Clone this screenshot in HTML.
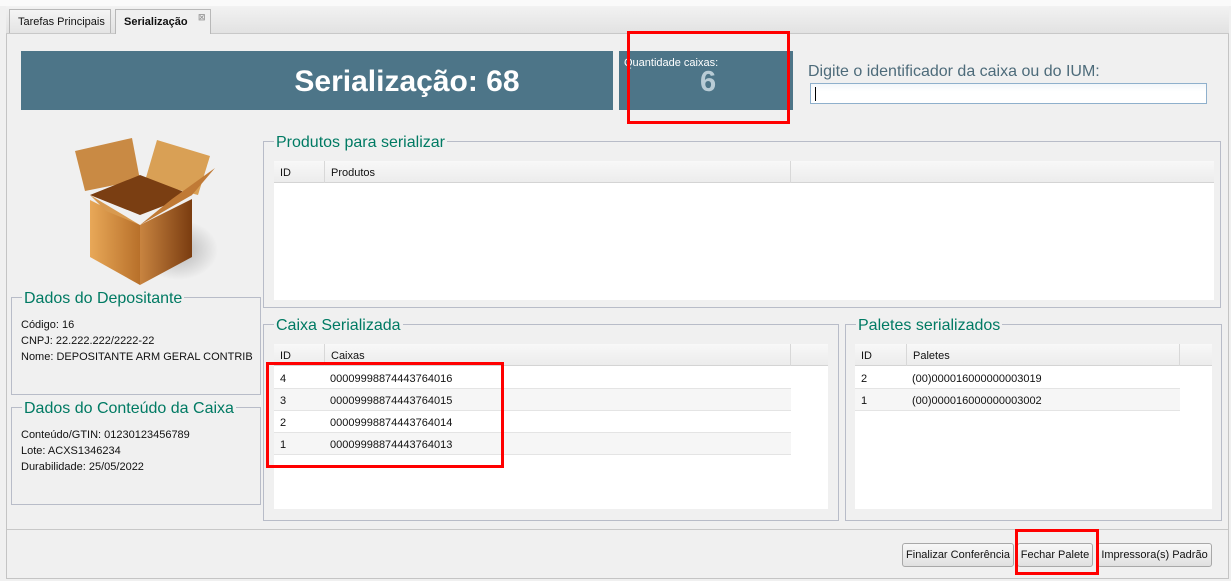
<!DOCTYPE html>
<html><head><meta charset="utf-8"><style>
*{box-sizing:border-box;margin:0;padding:0}
body{width:1231px;height:581px;background:#f0f0f0;font-family:"Liberation Sans","DejaVu Sans",sans-serif;font-size:11px;color:#111;position:relative;overflow:hidden}
.a{position:absolute}
.fs{position:absolute;border:1px solid #b8bcc8}
.lg{position:absolute;top:-9px;left:10px;background:#f0f0f0;color:#007a63;font-size:16px;padding:0 2px;line-height:20px;white-space:nowrap}
.tbl{position:absolute;background:#fff}
.hd{position:absolute;left:0;top:0;height:22px;background:linear-gradient(#f8f8f8,#ececec);border-bottom:1px solid #d4d4d4}
.hc{position:absolute;top:0;height:22px;line-height:24px;padding-left:6px;border-right:1px solid #d8d8d8}
.row{position:absolute;left:0;height:22px;line-height:24px;border-bottom:1px solid #e4e4e4}
.row span{position:absolute}
.red{position:absolute;border:3px solid #f00}
.btn{position:absolute;top:543px;height:24px;border:1px solid #a8a8a8;border-radius:3px;background:linear-gradient(#f8f8f8,#e0e0e0);line-height:22px;text-align:center;font-size:11px}
.tx{position:absolute;line-height:16px}
</style></head><body>
<div class="a" style="left:0;top:0;width:1231px;height:6px;background:#fafafa"></div>
<div class="a" style="left:6px;top:6px;width:1223px;height:28px;background:linear-gradient(#f2f2f2,#e2e2e2);border-bottom:1px solid #c8c8c8"></div>
<div class="a" style="left:9px;top:9px;width:102px;height:24px;border:1px solid #b8b8b8;border-bottom:none;background:linear-gradient(#f4f4f4,#e4e4e4);line-height:24px;padding-left:8px">Tarefas Principais</div>
<div class="a" style="left:115px;top:9px;width:96px;height:25px;border:1px solid #b8b8b8;border-bottom:none;background:#f0f0f0;line-height:24px;padding-left:8px;font-weight:bold">Serialização <span style="position:absolute;left:82px;top:-5px;font-size:9px;color:#999">⊠</span></div>
<div class="a" style="left:6px;top:34px;width:1223px;height:545px;border:1px solid #c4c4c4;border-top:none"></div>

<div class="a" style="left:21px;top:51px;width:592px;height:59px;background:#4d7588;color:#fff;font-size:30px;font-weight:bold;text-align:center;line-height:62px;padding-left:180px">Serialização: 68</div>
<div class="a" style="left:619px;top:51px;width:174px;height:59px;background:#4d7588"></div>
<div class="a" style="left:624px;top:57px;color:#fff;font-size:11px">Quantidade caixas:</div>
<div class="a" style="left:700px;top:66px;color:#b8ccd6;font-size:29px;font-weight:bold">6</div>
<div class="red" style="left:627px;top:31px;width:163px;height:93px"></div>
<div class="a" style="left:808px;top:63px;color:#4d6b7a;font-size:16px">Digite o identificador da caixa ou do IUM:</div>
<div class="a" style="left:810px;top:83px;width:397px;height:21px;border:1px solid #8fb0cc;background:linear-gradient(#f2f6fa,#fff 40%)"><div style="position:absolute;left:4px;top:3px;width:1px;height:14px;background:#000"></div></div>

<svg class="a" style="left:60px;top:135px" width="160" height="152" viewBox="0 0 160 152">
<defs><linearGradient id="g1" x1="0" x2="1"><stop offset="0" stop-color="#e8a858"/><stop offset="1" stop-color="#b8702a"/></linearGradient>
<linearGradient id="g2" x1="0" x2="1"><stop offset="0" stop-color="#c88440"/><stop offset="1" stop-color="#7a3c10"/></linearGradient>
<radialGradient id="sh"><stop offset="0" stop-color="#888" stop-opacity=".6"/><stop offset="1" stop-color="#888" stop-opacity="0"/></radialGradient></defs>
<ellipse cx="118" cy="115" rx="40" ry="30" fill="url(#sh)"/>
<polygon points="15,16 72,3 80,45 25,56" fill="#c98a44"/>
<polygon points="97,5 150,21 138,60 85,46" fill="#d9a055"/>
<polygon points="30,60 80,40 132,60 80,80" fill="#7a3e12"/>
<polygon points="30,65 80,90 80,150 30,122" fill="url(#g1)"/>
<polygon points="80,90 132,64 132,122 80,150" fill="url(#g2)"/>
<polygon points="3,33 30,60 80,90 46,76" fill="#d89a50"/>
<polygon points="155,33 132,60 80,90 112,64" fill="#c07a36"/>
</svg>

<div class="fs" style="left:11px;top:297px;width:250px;height:98px"><div class="lg">Dados do Depositante</div></div>
<div class="tx" style="left:21px;top:317px">Código: 16</div>
<div class="tx" style="left:21px;top:333px">CNPJ: 22.222.222/2222-22</div>
<div class="tx" style="left:21px;top:349px">Nome: DEPOSITANTE ARM GERAL CONTRIB</div>
<div class="fs" style="left:11px;top:407px;width:250px;height:98px"><div class="lg">Dados do Conteúdo da Caixa</div></div>
<div class="tx" style="left:21px;top:427px">Conteúdo/GTIN: 01230123456789</div>
<div class="tx" style="left:21px;top:443px">Lote: ACXS1346234</div>
<div class="tx" style="left:21px;top:459px">Durabilidade: 25/05/2022</div>

<div class="fs" style="left:263px;top:141px;width:958px;height:167px"><div class="lg">Produtos para serializar</div></div>
<div class="tbl" style="left:274px;top:161px;width:940px;height:139px">
<div class="hd" style="width:940px"><div class="hc" style="left:0;width:51px">ID</div><div class="hc" style="left:51px;width:466px">Produtos</div></div></div>

<div class="fs" style="left:263px;top:324px;width:576px;height:197px"><div class="lg">Caixa Serializada</div></div>
<div class="tbl" style="left:274px;top:344px;width:554px;height:165px">
<div class="hd" style="width:554px"><div class="hc" style="left:0;width:51px">ID</div><div class="hc" style="left:51px;width:466px">Caixas</div></div>
<div class="row" style="top:23px;width:517px;background:#fff"><span style="left:6px">4</span><span style="left:56px">00009998874443764016</span></div>
<div class="row" style="top:45px;width:517px;background:#f6f6f6"><span style="left:6px">3</span><span style="left:56px">00009998874443764015</span></div>
<div class="row" style="top:67px;width:517px;background:#fff"><span style="left:6px">2</span><span style="left:56px">00009998874443764014</span></div>
<div class="row" style="top:89px;width:517px;background:#f6f6f6"><span style="left:6px">1</span><span style="left:56px">00009998874443764013</span></div>
</div>
<div class="red" style="left:266px;top:362px;width:238px;height:106px"></div>

<div class="fs" style="left:845px;top:324px;width:377px;height:197px"><div class="lg">Paletes serializados</div></div>
<div class="tbl" style="left:855px;top:344px;width:357px;height:165px">
<div class="hd" style="width:357px"><div class="hc" style="left:0;width:52px">ID</div><div class="hc" style="left:52px;width:273px">Paletes</div></div>
<div class="row" style="top:23px;width:325px;background:#fff"><span style="left:6px">2</span><span style="left:57px">(00)000016000000003019</span></div>
<div class="row" style="top:45px;width:325px;background:#f6f6f6"><span style="left:6px">1</span><span style="left:57px">(00)000016000000003002</span></div>
</div>

<div class="a" style="left:7px;top:529px;width:1221px;height:1px;background:#c8c8c8"></div>
<div class="btn" style="left:902px;width:112px">Finalizar Conferência</div>
<div class="btn" style="left:1017px;width:76px">Fechar Palete</div>
<div class="btn" style="left:1097px;width:115px">Impressora(s) Padrão</div>
<div class="red" style="left:1015px;top:529px;width:84px;height:46px"></div>
</body></html>
